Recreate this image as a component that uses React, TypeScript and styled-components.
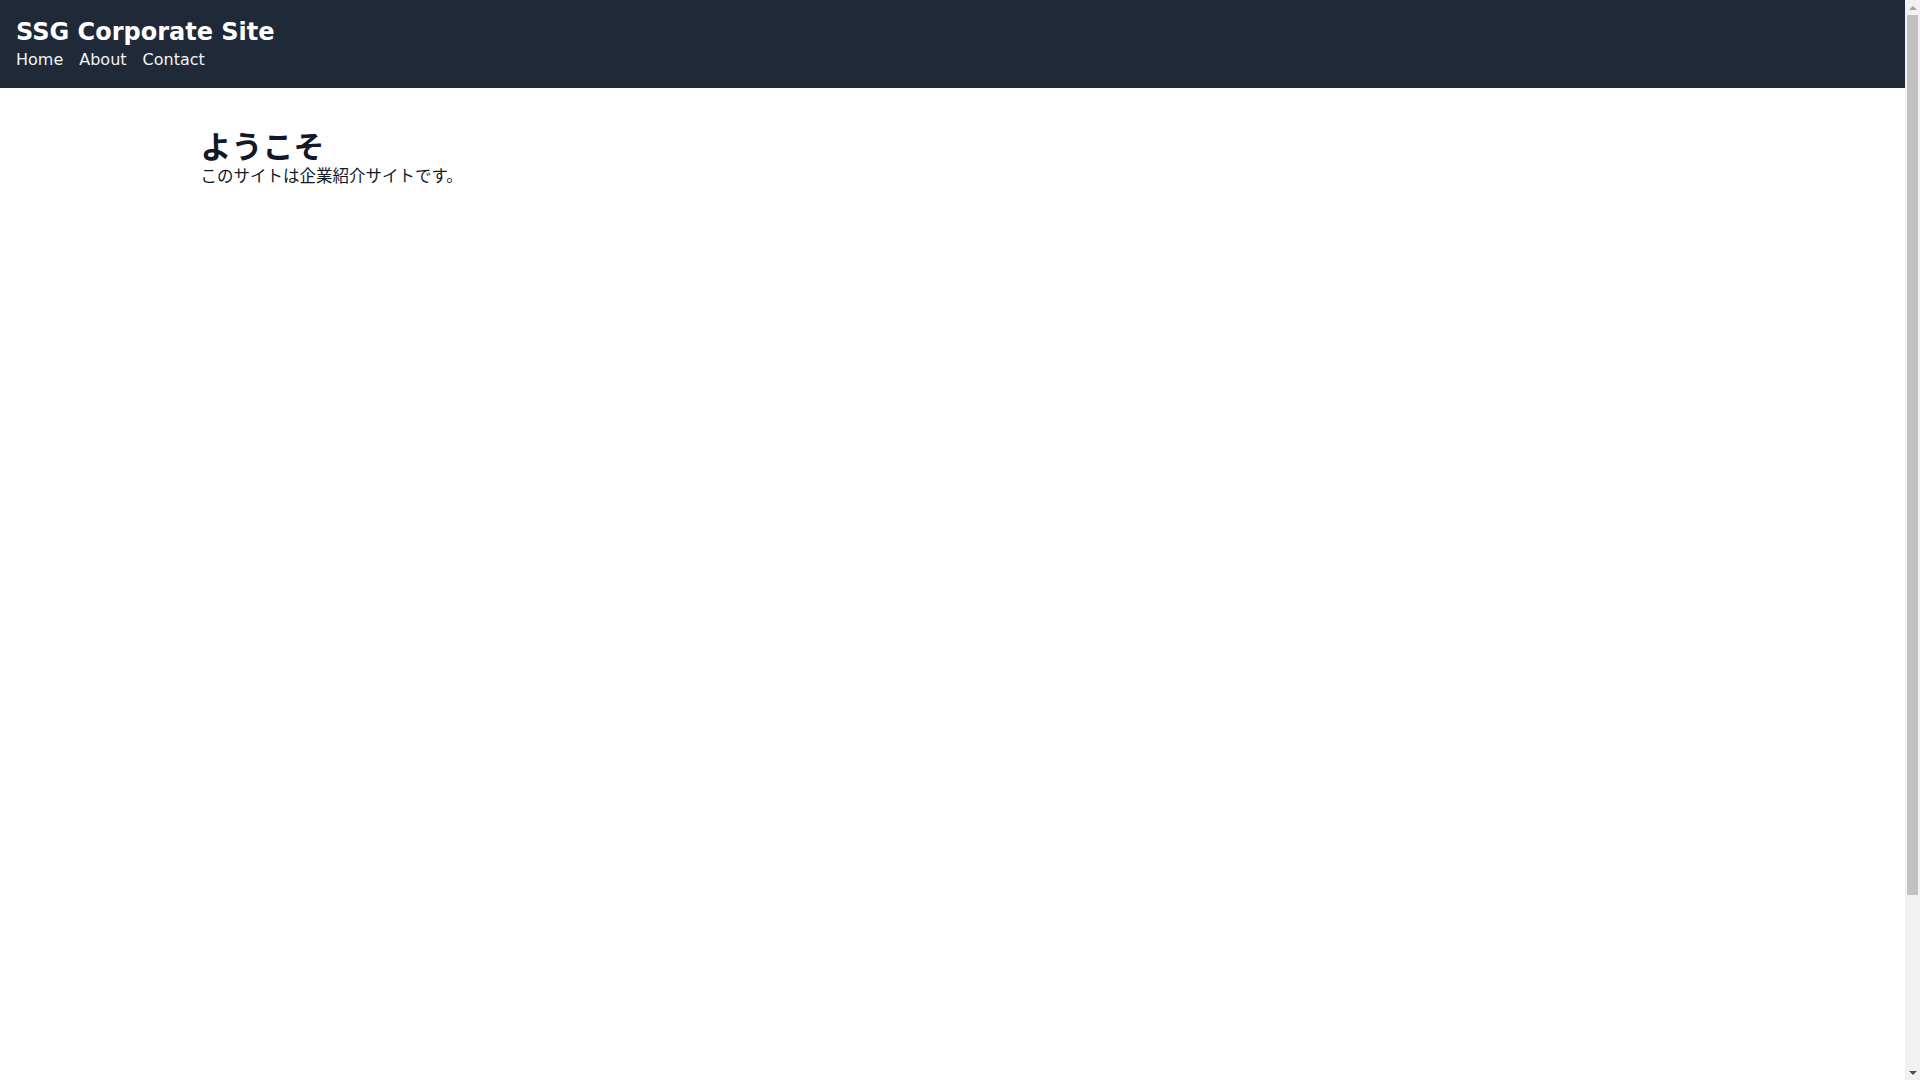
import * as React from 'react';
import styled, { createGlobalStyle } from 'styled-components';

const GlobalStyle = createGlobalStyle`
    html, body {
        margin: 0;
        padding: 0;
    }
    body {
        font-family: 'DejaVu Sans', 'Noto Sans CJK JP', sans-serif;
        color: #111827;
        background: #ffffff;
        line-height: 1.5;
    }
    *, *::before, *::after {
        box-sizing: border-box;
    }
`;

const Page = styled('div')`
    display: flex;
    flex-direction: column;
    min-height: 100vh;
    margin-right: 15px;
`;

const Header = styled('header')`
    background: #1f2937;
    color: #ffffff;
    padding: 16px;
`;

const SiteTitle = styled('h1')`
    margin: 0;
    font-size: 24px;
    line-height: 32px;
    font-weight: 700;
`;

const Nav = styled('nav')`
    display: flex;
    gap: 16px;
`;

const NavLink = styled('a')`
    color: #f3f4f6;
    text-decoration: none;
    font-size: 16px;
    line-height: 24px;
    cursor: pointer;
    &:hover {
        text-decoration: underline;
    }
`;

const Main = styled('main')`
    width: 100%;
    max-width: 1536px;
    margin: 0 auto;
    padding: 41px 16px 40px;
`;

const Heading = styled('h2')`
    margin: 0;
    font-size: 31px;
    line-height: 36px;
    font-weight: 700;
`;

const Lead = styled('p')`
    margin: 0;
    font-size: 16.5px;
    line-height: 24px;
`;

// classic window scrollbar drawn over the right edge
const ScrollTrack = styled('div')`
    position: fixed;
    top: 0;
    right: 0;
    width: 15px;
    height: 100vh;
    background: #f1f1f1;
    display: flex;
    flex-direction: column;
`;

const ScrollArrow = styled('div')<{ $down?: boolean; $active?: boolean }>`
    height: 15px;
    flex: none;
    display: flex;
    align-items: center;
    justify-content: center;
    &::before {
        content: '';
        width: 0;
        height: 0;
        border-left: 4px solid transparent;
        border-right: 4px solid transparent;
        ${(p) =>
            p.$down
                ? `border-top: 4px solid ${p.$active ? '#505050' : '#a3a3a3'};`
                : `border-bottom: 4px solid ${p.$active ? '#505050' : '#a3a3a3'};`}
    }
`;

const ScrollThumb = styled('div')`
    height: 880px;
    margin: 0 2px;
    background: #c1c1c1;
    flex: none;
`;

const ScrollRest = styled('div')`
    flex: 1;
`;

const links = ['Home', 'About', 'Contact'];

const App: React.FunctionComponent = () => {
    return (
        <>
            <GlobalStyle />
            <Page>
                <Header>
                    <SiteTitle>SSG Corporate Site</SiteTitle>
                    <Nav>
                        {links.map((label) => (
                            <NavLink key={label} href="#">
                                {label}
                            </NavLink>
                        ))}
                    </Nav>
                </Header>
                <Main>
                    <Heading>ようこそ</Heading>
                    <Lead>このサイトは企業紹介サイトです。</Lead>
                </Main>
            </Page>
            <ScrollTrack aria-hidden>
                <ScrollArrow />
                <ScrollThumb />
                <ScrollRest />
                <ScrollArrow $down $active />
            </ScrollTrack>
        </>
    );
};

export default App;
